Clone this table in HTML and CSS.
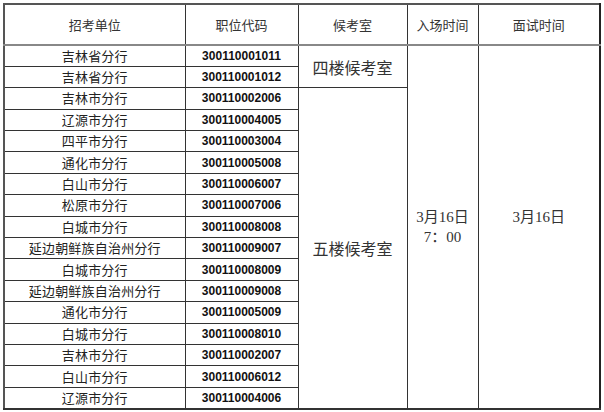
FILE: index.html
```html
<!DOCTYPE html>
<html lang="zh-CN">
<head>
<meta charset="utf-8">
<link rel="stylesheet" href="styles.css">
</head>
<body>
<table class="sched">
  <colgroup>
    <col class="c1"><col class="c2"><col class="c3"><col class="c4"><col class="c5">
  </colgroup>
  <thead>
    <tr class="head">
      <th>招考单位</th><th>职位代码</th><th>候考室</th><th>入场时间</th><th>面试时间</th>
    </tr>
  </thead>
  <tbody>
    <tr><td class="unit">吉林省分行</td><td class="code">300110001011</td><td class="room" rowspan="2">四楼候考室</td><td class="time" rowspan="17">3月16日<br>7：00</td><td class="time" rowspan="17">3月16日<br>&nbsp;</td></tr>
    <tr><td class="unit">吉林省分行</td><td class="code">300110001012</td></tr>
    <tr><td class="unit">吉林市分行</td><td class="code">300110002006</td><td class="room" rowspan="15">五楼候考室</td></tr>
    <tr><td class="unit">辽源市分行</td><td class="code">300110004005</td></tr>
    <tr><td class="unit">四平市分行</td><td class="code">300110003004</td></tr>
    <tr><td class="unit">通化市分行</td><td class="code">300110005008</td></tr>
    <tr><td class="unit">白山市分行</td><td class="code">300110006007</td></tr>
    <tr><td class="unit">松原市分行</td><td class="code">300110007006</td></tr>
    <tr><td class="unit">白城市分行</td><td class="code">300110008008</td></tr>
    <tr><td class="unit">延边朝鲜族自治州分行</td><td class="code">300110009007</td></tr>
    <tr><td class="unit">白城市分行</td><td class="code">300110008009</td></tr>
    <tr><td class="unit">延边朝鲜族自治州分行</td><td class="code">300110009008</td></tr>
    <tr><td class="unit">通化市分行</td><td class="code">300110005009</td></tr>
    <tr><td class="unit">白城市分行</td><td class="code">300110008010</td></tr>
    <tr><td class="unit">吉林市分行</td><td class="code">300110002007</td></tr>
    <tr><td class="unit">白山市分行</td><td class="code">300110006012</td></tr>
    <tr><td class="unit">辽源市分行</td><td class="code">300110004006</td></tr>
  </tbody>
</table>
</body>
</html>
```
FILE: styles.css
```css
html, body {
  margin: 0;
  background: #fff;
}
body {
  padding: 3px 0 0 3px;
  font-family: "Noto Sans CJK SC", sans-serif;
  color: #222;
}
.sched {
  border-collapse: collapse;
  table-layout: fixed;
  width: 597px;
  border-top: 2px solid #555;
  border-left: 2px solid #555;
  border-right: 2px solid #222;
  border-bottom: 2px solid #333;
}
.c1 { width: 181px; }
.c2 { width: 113px; }
.c3 { width: 109px; }
.c4 { width: 71px; }
.c5 { width: 122px; }
.sched th, .sched td {
  border: 1px solid #333;
  padding: 0;
  text-align: center;
  vertical-align: middle;
}
.head th {
  height: 39px;
  font-weight: normal;
  font-size: 13px;
  color: #333;
  border-bottom: 2px solid #888;
}
.sched tbody tr {
  height: 21.4px;
}
.unit {
  font-size: 13px;
  line-height: 16px;
  letter-spacing: 0.2px;
}
.code {
  font-family: "Liberation Sans", Arial, sans-serif;
  font-weight: bold;
  font-size: 12px;
  color: #111;
}
.room {
  font-size: 16px;
  color: #333;
}
.time {
  font-family: "Liberation Serif", "Noto Sans CJK SC", serif;
  font-size: 15px;
  line-height: 20px;
  color: #333;
}
```
